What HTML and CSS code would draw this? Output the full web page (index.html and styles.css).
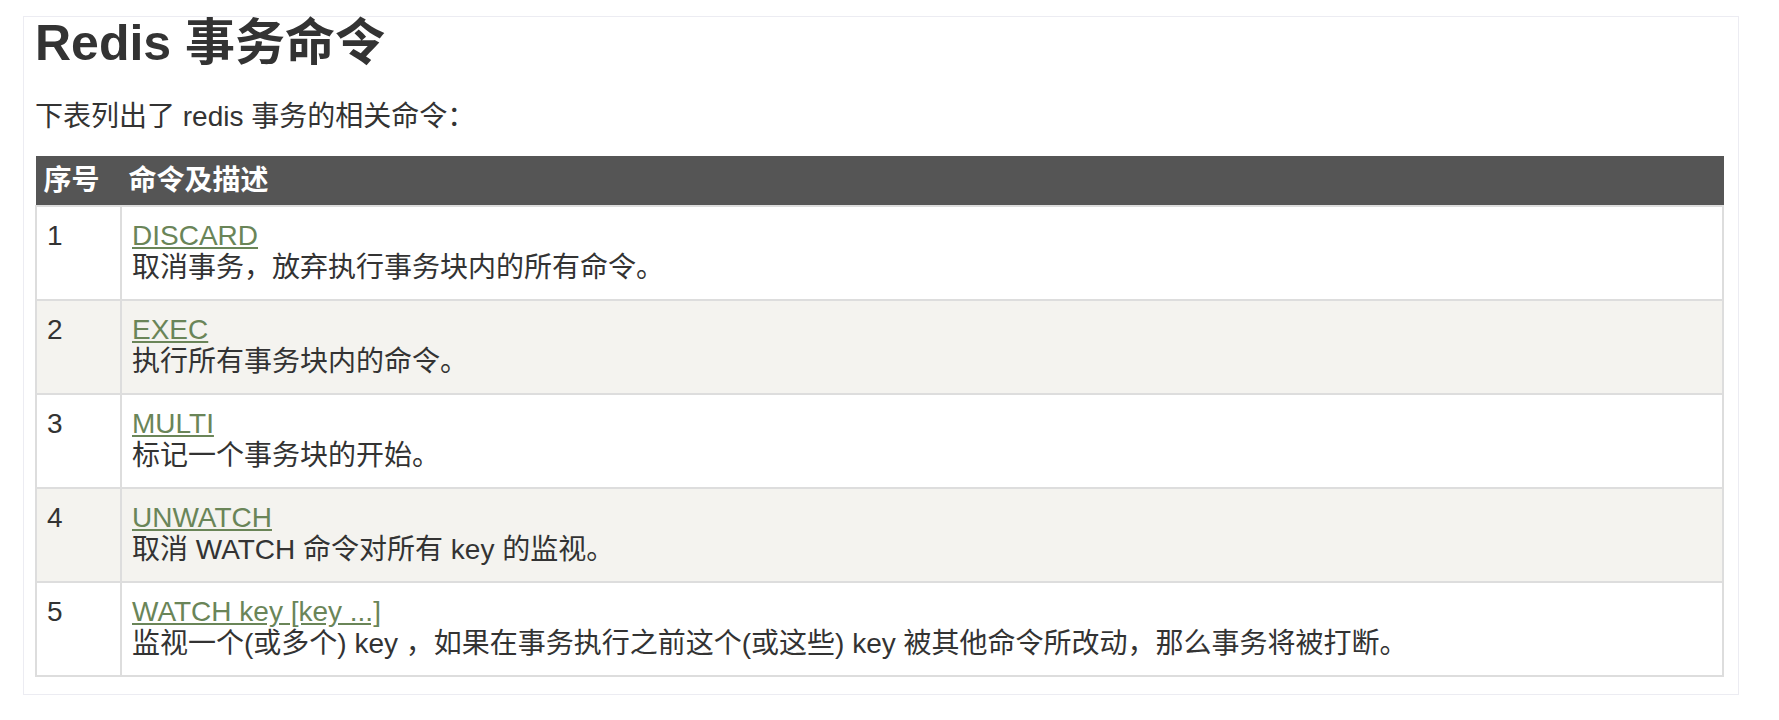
FILE: index.html
```html
<!DOCTYPE html>
<html lang="zh-CN">
<head>
<meta charset="utf-8">
<title>Redis 事务命令</title>
<link rel="stylesheet" href="styles.css">
</head>
<body>
<div class="article">
  <h1 class="title">Redis 事务命令</h1>
  <p class="intro">下表列出了 redis 事务的相关命令：</p>
  <table class="reference">
    <colgroup><col class="col-no"><col></colgroup>
    <thead>
      <tr><th>序号</th><th>命令及描述</th></tr>
    </thead>
    <tbody>
      <tr><td>1</td><td><a href="#">DISCARD</a><br>取消事务，放弃执行事务块内的所有命令。</td></tr>
      <tr><td>2</td><td><a href="#">EXEC</a><br>执行所有事务块内的命令。</td></tr>
      <tr><td>3</td><td><a href="#">MULTI</a><br>标记一个事务块的开始。</td></tr>
      <tr><td>4</td><td><a href="#">UNWATCH</a><br>取消 WATCH 命令对所有 key 的监视。</td></tr>
      <tr><td>5</td><td><a href="#">WATCH key [key ...]</a><br>监视一个(或多个) key ，如果在事务执行之前这个(或这些) key 被其他命令所改动，那么事务将被打断。</td></tr>
    </tbody>
  </table>
</div>
</body>
</html>
```
FILE: styles.css
```css
body {
  margin: 0;
  background: #fff;
  color: #333;
  font-family: "Liberation Sans", "Noto Sans CJK SC", sans-serif;
}

.article {
  box-sizing: border-box;
  width: 1716px;
  margin: 16px 0 0 23px;
  border: 1px solid #ececf2;
  padding: 2px 14px 17px 11px;
}

.title {
  margin: 0;
  font-size: 50px;
  line-height: 48px;
  font-weight: bold;
  color: #333;
}

.intro {
  margin: 34px 0 23px;
  font-size: 28px;
  line-height: 32px;
}

.reference {
  width: 100%;
  table-layout: fixed;
  border-collapse: collapse;
  font-size: 28px;
  line-height: 32px;
}

.reference .col-no {
  width: 85px;
}

.reference th {
  background: #555;
  color: #fff;
  text-align: left;
  font-weight: bold;
  padding: 8px 7px;
  border: 1px solid #555;
}

.reference td {
  border: 2px solid #ddd;
  padding: 13px 10px 15px;
  vertical-align: top;
}

.reference tbody tr:nth-child(even) td {
  background: #f4f3ef;
}

.reference a {
  color: #6a8558;
  text-decoration: underline;
}
```
